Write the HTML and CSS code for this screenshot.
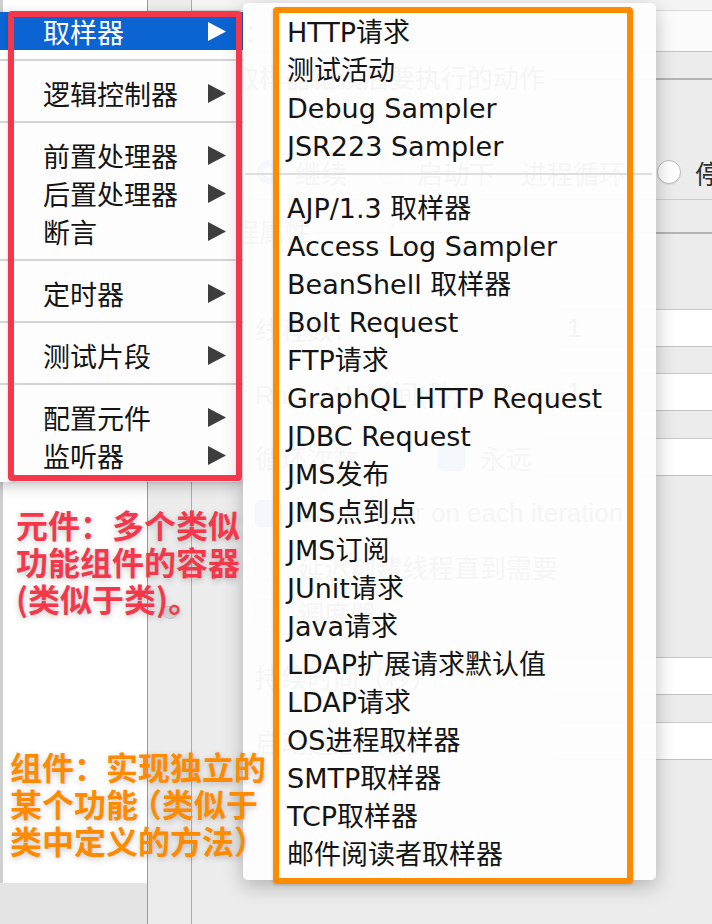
FILE: index.html
```html
<!DOCTYPE html>
<html lang="zh-CN">
<head>
<meta charset="utf-8">
<title>JMeter 添加菜单</title>
<link rel="stylesheet" href="styles.css">
</head>
<body>
<div class="app">
  <aside class="tree"><div class="tree-body"></div></aside>
  <div class="splitter"><span class="knob"></span></div>
  <main class="form">
    <div class="form-top"></div>
    <div class="comment-row"><span class="label">注释：</span></div>
    <div class="gap-a"></div>
    <section class="group group-error">
      <div class="legend">在取样器错误后要执行的动作</div>
      <div class="radio-row">
        <span class="opt"><span class="radio on"></span><span>继续</span></span>
        <span class="opt"><span class="radio"></span><span>启动下一进程循环</span></span>
        <span class="opt"><span class="radio"></span><span>停止线程</span></span>
      </div>
    </section>
    <div class="gap-b"></div>
    <section class="group group-thread">
      <div class="legend">线程属性</div>
      <div class="field-row r1"><span class="flabel">线程数：</span><span class="input">1</span></div>
      <div class="field-row r2"><span class="flabel">Ramp-Up时间(秒)：</span><span class="input">1</span></div>
      <div class="field-row r3"><span class="flabel short">循环次数</span><span class="check on"></span><span class="forever">永远</span><span class="input"></span></div>
      <div class="check-row c1"><span class="check on"></span><span>Same user on each iteration</span></div>
      <div class="check-row c2"><span class="check"></span><span>延迟创建线程直到需要</span></div>
      <div class="check-row c3"><span class="check"></span><span>调度器</span></div>
      <div class="field-row r4"><span class="flabel">持续时间（秒）</span><span class="input"></span></div>
      <div class="field-row r5"><span class="flabel">启动延迟（秒）</span><span class="input"></span></div>
    </section>
  </main>
</div>

<nav class="ctx-menu">
  <div class="mi active"><span>取样器</span><svg class="arrow" viewBox="0 0 18 19"><path d="M0 0L18 9.5L0 19Z"/></svg></div>
  <div class="sep"></div>
  <div class="mi"><span>逻辑控制器</span><svg class="arrow" viewBox="0 0 18 19"><path d="M0 0L18 9.5L0 19Z"/></svg></div>
  <div class="sep"></div>
  <div class="mi"><span>前置处理器</span><svg class="arrow" viewBox="0 0 18 19"><path d="M0 0L18 9.5L0 19Z"/></svg></div>
  <div class="mi"><span>后置处理器</span><svg class="arrow" viewBox="0 0 18 19"><path d="M0 0L18 9.5L0 19Z"/></svg></div>
  <div class="mi"><span>断言</span><svg class="arrow" viewBox="0 0 18 19"><path d="M0 0L18 9.5L0 19Z"/></svg></div>
  <div class="sep"></div>
  <div class="mi"><span>定时器</span><svg class="arrow" viewBox="0 0 18 19"><path d="M0 0L18 9.5L0 19Z"/></svg></div>
  <div class="sep"></div>
  <div class="mi"><span>测试片段</span><svg class="arrow" viewBox="0 0 18 19"><path d="M0 0L18 9.5L0 19Z"/></svg></div>
  <div class="sep"></div>
  <div class="mi"><span>配置元件</span><svg class="arrow" viewBox="0 0 18 19"><path d="M0 0L18 9.5L0 19Z"/></svg></div>
  <div class="mi"><span>监听器</span><svg class="arrow" viewBox="0 0 18 19"><path d="M0 0L18 9.5L0 19Z"/></svg></div>
</nav>

<nav class="sub-menu">
  <div class="si">HTTP请求</div>
  <div class="si">测试活动</div>
  <div class="si">Debug Sampler</div>
  <div class="si">JSR223 Sampler</div>
  <div class="sep sub-sep"></div>
  <div class="si">AJP/1.3 取样器</div>
  <div class="si">Access Log Sampler</div>
  <div class="si">BeanShell 取样器</div>
  <div class="si">Bolt Request</div>
  <div class="si">FTP请求</div>
  <div class="si">GraphQL HTTP Request</div>
  <div class="si">JDBC Request</div>
  <div class="si">JMS发布</div>
  <div class="si">JMS点到点</div>
  <div class="si">JMS订阅</div>
  <div class="si">JUnit请求</div>
  <div class="si">Java请求</div>
  <div class="si">LDAP扩展请求默认值</div>
  <div class="si">LDAP请求</div>
  <div class="si">OS进程取样器</div>
  <div class="si">SMTP取样器</div>
  <div class="si">TCP取样器</div>
  <div class="si">邮件阅读者取样器</div>
</nav>

<div class="frame frame-red"></div>
<div class="frame frame-orange"></div>

<p class="note note-red">元件：多个类似<br>功能组件的容器<br>(类似于类)。</p>
<p class="note note-orange">组件：实现独立的<br>某个功能<span class="paren">（</span>类似于<br>类中定义的方法）</p>
</body>
</html>
```
FILE: styles.css
```css
* { box-sizing: border-box; }
html, body { margin: 0; padding: 0; }
body {
  width: 712px;
  height: 924px;
  overflow: hidden;
  position: relative;
  background: #ececec;
  font-family: "DejaVu Sans", "Noto Sans CJK SC", sans-serif;
}

/* ---------- background window ---------- */
.app { display: flex; height: 924px; }
.tree {
  width: 148px;
  flex: none;
  background: #e4e4e4;
  border-right: 1px solid #9a9a9a;
}
.tree-body {
  height: 883px;
  background: #fff;
  border-left: 3px solid #d0d0d0;
}
.splitter {
  width: 44px;
  flex: none;
  border-right: 1px solid #ababab;
  display: flex;
  justify-content: center;
  padding-top: 606px;
}
.knob {
  width: 18px;
  height: 13px;
  background: #dcdcdc;
  border: 1px solid #c8c8c8;
  border-radius: 0 0 9px 9px;
}
.form {
  flex: none;
  width: 600px;
  display: flex;
  flex-direction: column;
  color: #303030;
  font-family: "Liberation Sans", "Noto Sans CJK SC", sans-serif;
  font-size: 26px;
  white-space: nowrap;
}
.form-top {
  height: 11px;
  background: #f4f4f4;
  border-bottom: 1px solid #d9d9d9;
}
.comment-row {
  height: 41px;
  display: flex;
  align-items: center;
  padding-left: 0;
  background: #fbfbfb;
  border-bottom: 1px solid #c4c4c4;
}
.gap-a { height: 26px; }
.gap-b { height: 32px; }
.group {
  border-top: 2px solid #b4b4b4;
  padding-left: 15px;
}
.group-error {
  height: 122px;
  border-bottom: 1px solid #cdcdcd;
}
.legend {
  width: max-content;
  height: 32px;
  line-height: 32px;
  margin-top: -17px;
  padding-right: 6px;
  background: #ececec;
}
.radio-row {
  display: flex;
  align-items: center;
  gap: 32px;
  height: 40px;
  margin-top: 57px;
  padding-left: 50px;
}
.opt { display: flex; flex: none; align-items: center; gap: 14px; }
.radio {
  width: 24px;
  height: 24px;
  flex: none;
  border-radius: 50%;
  background: #fff;
  border: 1px solid #bcbcbc;
  box-shadow: 0 1px 1px rgba(0,0,0,0.08);
}
.radio.on { background: #fff; border: 7px solid #1b72e6; }

.field-row {
  display: flex;
  align-items: center;
  height: 38px;
  padding-left: 48px;
}
.r1 { margin-top: 60px; }
.r2 { margin-top: 26px; }
.r3 { margin-top: 27px; }
.r4 { margin-top: 28px; }
.r5 { margin-top: 27px; }
.flabel { width: 300px; flex: none; }
.flabel.short { width: 183px; }
.forever { width: 75px; flex: none; padding-left: 15px; }
.input {
  flex: 1;
  align-self: stretch;
  background: #fff;
  border-top: 1px solid #c9c9c9;
  border-bottom: 1px solid #c2c2c2;
  padding-left: 12px;
  line-height: 36px;
}
.check {
  width: 27px;
  height: 27px;
  flex: none;
  border-radius: 5px;
  background: #fff;
  border: 1px solid #c2c2c2;
  box-shadow: 0 1px 2px rgba(0,0,0,0.1);
}
.check.on { background: #1b72e6; border-color: #1766d0; }
.check-row {
  display: flex;
  align-items: center;
  gap: 16px;
  height: 34px;
  padding-left: 48px;
}
.c1 { margin-top: 20px; }
.c2 { margin-top: 19px; }
.c3 { margin-top: 12px; }

/* ---------- context menus ---------- */
.ctx-menu {
  position: absolute;
  left: -10px;
  top: 12px;
  width: 253px;
  padding-bottom: 8px;
  background: #fdfdfd;
  border-radius: 0 0 5px 5px;
  box-shadow: 0 4px 14px rgba(0,0,0,0.22);
  color: #141414;
  font-size: 27px;
}
.mi {
  height: 38px;
  display: flex;
  align-items: center;
  justify-content: space-between;
  padding: 0 17px 0 53px;
}
.mi.active { background: #0b64d2; color: #fff; }
.arrow { width: 18px; height: 19px; fill: #3e3e3e; }
.mi.active .arrow { fill: #fff; }
.sep {
  margin: 9px 0 13px;
  border-top: 2px solid #d4d4d4;
}
.sub-menu {
  position: absolute;
  left: 243px;
  top: 3px;
  width: 413px;
  height: 877px;
  padding: 11px 0 0 44px;
  background: rgba(253,253,253,0.962);
  border-radius: 5px;
  box-shadow: 0 6px 20px rgba(0,0,0,0.25);
  color: #141414;
  font-size: 27px;
}
.si {
  height: 38px;
  line-height: 38px;
  white-space: nowrap;
}
.sub-sep {
  margin: 7px 4px 15px -42px;
  border-top-color: #dedede;
}

/* ---------- annotations ---------- */
.frame {
  position: absolute;
  border-radius: 4px;
  box-shadow: 0 1px 3px rgba(0,0,0,0.18);
}
.frame-red {
  left: 8px;
  top: 11px;
  width: 234px;
  height: 470px;
  border: 6px solid #f5374b;
}
.frame-orange {
  left: 273px;
  top: 7px;
  width: 360px;
  height: 877px;
  border: 6px solid #ff8c00;
}
.note {
  position: absolute;
  margin: 0;
  font-family: "Noto Sans CJK SC", sans-serif;
  font-size: 32px;
  line-height: 37px;
  font-weight: 600;
  white-space: nowrap;
  text-shadow: 0 2px 6px rgba(0,0,0,0.22);
}
.note-red { left: 16px; top: 506px; color: #f5374b; }
.note-orange { left: 10px; top: 748px; color: #ff8a00; }
.paren { margin-left: -8px; }
```
